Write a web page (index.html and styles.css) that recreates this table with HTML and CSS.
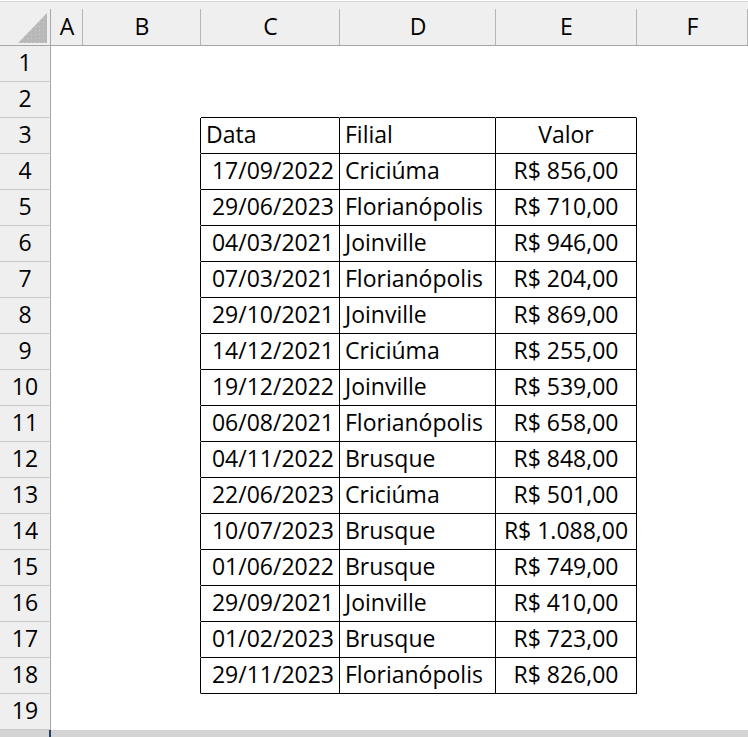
FILE: index.html
```html
<!DOCTYPE html>
<html lang="pt-BR">
<head>
<meta charset="utf-8">
<title>Planilha</title>
<link rel="stylesheet" href="styles.css">
</head>
<body>
<div class="sheet">
  <div class="row hdr">
    <div class="corner"><svg class="tri" width="29" height="30" viewBox="0 0 29 30"><defs><pattern id="dots" width="4" height="4" patternUnits="userSpaceOnUse"><rect width="4" height="4" fill="#b8b8b8"/><rect x="1" y="1" width="1" height="1" fill="#cfcfcf"/></pattern></defs><polygon points="29,0 29,30 0,30" fill="url(#dots)"/></svg></div>
    <div class="ch">A</div><div class="ch">B</div><div class="ch">C</div><div class="ch">D</div><div class="ch">E</div><div class="ch">F</div>
  </div>
  <div class="row"><div class="rh">1</div><div class="c"></div><div class="c"></div><div class="c"></div><div class="c"></div><div class="c"></div><div class="c"></div></div>
  <div class="row"><div class="rh">2</div><div class="c"></div><div class="c"></div><div class="c bb"></div><div class="c bb"></div><div class="c bb"></div><div class="c"></div></div>
  <div class="row"><div class="rh">3</div><div class="c"></div><div class="c br"></div><div class="c t l">Data</div><div class="c t l">Filial</div><div class="c t m">Valor</div><div class="c"></div></div>
  <div class="row"><div class="rh">4</div><div class="c"></div><div class="c br"></div><div class="c t r">17/09/2022</div><div class="c t l">Criciúma</div><div class="c t m">R$ 856,00</div><div class="c"></div></div>
  <div class="row"><div class="rh">5</div><div class="c"></div><div class="c br"></div><div class="c t r">29/06/2023</div><div class="c t l">Florianópolis</div><div class="c t m">R$ 710,00</div><div class="c"></div></div>
  <div class="row"><div class="rh">6</div><div class="c"></div><div class="c br"></div><div class="c t r">04/03/2021</div><div class="c t l">Joinville</div><div class="c t m">R$ 946,00</div><div class="c"></div></div>
  <div class="row"><div class="rh">7</div><div class="c"></div><div class="c br"></div><div class="c t r">07/03/2021</div><div class="c t l">Florianópolis</div><div class="c t m">R$ 204,00</div><div class="c"></div></div>
  <div class="row"><div class="rh">8</div><div class="c"></div><div class="c br"></div><div class="c t r">29/10/2021</div><div class="c t l">Joinville</div><div class="c t m">R$ 869,00</div><div class="c"></div></div>
  <div class="row"><div class="rh">9</div><div class="c"></div><div class="c br"></div><div class="c t r">14/12/2021</div><div class="c t l">Criciúma</div><div class="c t m">R$ 255,00</div><div class="c"></div></div>
  <div class="row"><div class="rh">10</div><div class="c"></div><div class="c br"></div><div class="c t r">19/12/2022</div><div class="c t l">Joinville</div><div class="c t m">R$ 539,00</div><div class="c"></div></div>
  <div class="row"><div class="rh">11</div><div class="c"></div><div class="c br"></div><div class="c t r">06/08/2021</div><div class="c t l">Florianópolis</div><div class="c t m">R$ 658,00</div><div class="c"></div></div>
  <div class="row"><div class="rh">12</div><div class="c"></div><div class="c br"></div><div class="c t r">04/11/2022</div><div class="c t l">Brusque</div><div class="c t m">R$ 848,00</div><div class="c"></div></div>
  <div class="row"><div class="rh">13</div><div class="c"></div><div class="c br"></div><div class="c t r">22/06/2023</div><div class="c t l">Criciúma</div><div class="c t m">R$ 501,00</div><div class="c"></div></div>
  <div class="row"><div class="rh">14</div><div class="c"></div><div class="c br"></div><div class="c t r">10/07/2023</div><div class="c t l">Brusque</div><div class="c t m">R$ 1.088,00</div><div class="c"></div></div>
  <div class="row"><div class="rh">15</div><div class="c"></div><div class="c br"></div><div class="c t r">01/06/2022</div><div class="c t l">Brusque</div><div class="c t m">R$ 749,00</div><div class="c"></div></div>
  <div class="row"><div class="rh">16</div><div class="c"></div><div class="c br"></div><div class="c t r">29/09/2021</div><div class="c t l">Joinville</div><div class="c t m">R$ 410,00</div><div class="c"></div></div>
  <div class="row"><div class="rh">17</div><div class="c"></div><div class="c br"></div><div class="c t r">01/02/2023</div><div class="c t l">Brusque</div><div class="c t m">R$ 723,00</div><div class="c"></div></div>
  <div class="row"><div class="rh">18</div><div class="c"></div><div class="c br"></div><div class="c t r">29/11/2023</div><div class="c t l">Florianópolis</div><div class="c t m">R$ 826,00</div><div class="c"></div></div>
  <div class="row"><div class="rh">19</div><div class="c"></div><div class="c"></div><div class="c"></div><div class="c"></div><div class="c"></div><div class="c"></div></div>
</div>
<div class="tabs"><div class="tabs-left"></div><div class="tabs-edge"></div><div class="tabs-rest"></div></div>
</body>
</html>
```
FILE: styles.css
```css
html, body {
  margin: 0;
  padding: 0;
  background: #ffffff;
  overflow: hidden;
}
body {
  width: 748px;
  height: 737px;
  font-family: "Open Sans", "Noto Sans", sans-serif;
  font-size: 23px;
  color: #000;
}
.sheet {
  display: flex;
  flex-direction: column;
}
.row {
  display: grid;
  grid-template-columns: 51px 32px 118px 139px 156px 141px 1fr;
  height: 36px;
}
.row > div {
  box-sizing: border-box;
  display: flex;
  align-items: center;
  white-space: nowrap;
  overflow: hidden;
  line-height: 1;
  padding-bottom: 3px;
}
.hdr {
  height: 46px;
  box-sizing: border-box;
  border-bottom: 1px solid #a6a6a6;
  background: linear-gradient(#ffffff 0 1px, #d6d6d6 1px 2px, #efefef 2px);
}
.corner {
  justify-content: flex-end;
  align-items: flex-end !important;
  padding: 0 4px 2px 0 !important;
  background: linear-gradient(#a9a9a9, #a9a9a9) no-repeat right 0 top 9px / 1px 36px;
}
.tri {
  display: block;
}
.ch {
  justify-content: center;
  padding-top: 10px;
  background: linear-gradient(#b6b6b6, #b6b6b6) no-repeat right 0 top 9px / 1px 36px;
}
.rh {
  justify-content: center;
  background: #efefef;
  border-right: 1px solid #a6a6a6;
  border-bottom: 1px solid #c9c9c9;
}
.c {
  border-right: 1px solid transparent;
  border-bottom: 1px solid transparent;
  padding-left: 5px;
  padding-right: 5px;
}
.bb {
  border-bottom-color: #000;
}
.br {
  border-right-color: #000;
}
.t {
  border-right-color: #000;
  border-bottom-color: #000;
}
.l {
  justify-content: flex-start;
}
.r {
  justify-content: flex-end;
}
.m {
  justify-content: center;
}
.tabs {
  display: flex;
  height: 8px;
  background: #d4d4d4;
}
.tabs-left {
  width: 49px;
}
.tabs-edge {
  width: 2px;
  background: #23415f;
}
.tabs-rest {
  flex: 1;
}
```
